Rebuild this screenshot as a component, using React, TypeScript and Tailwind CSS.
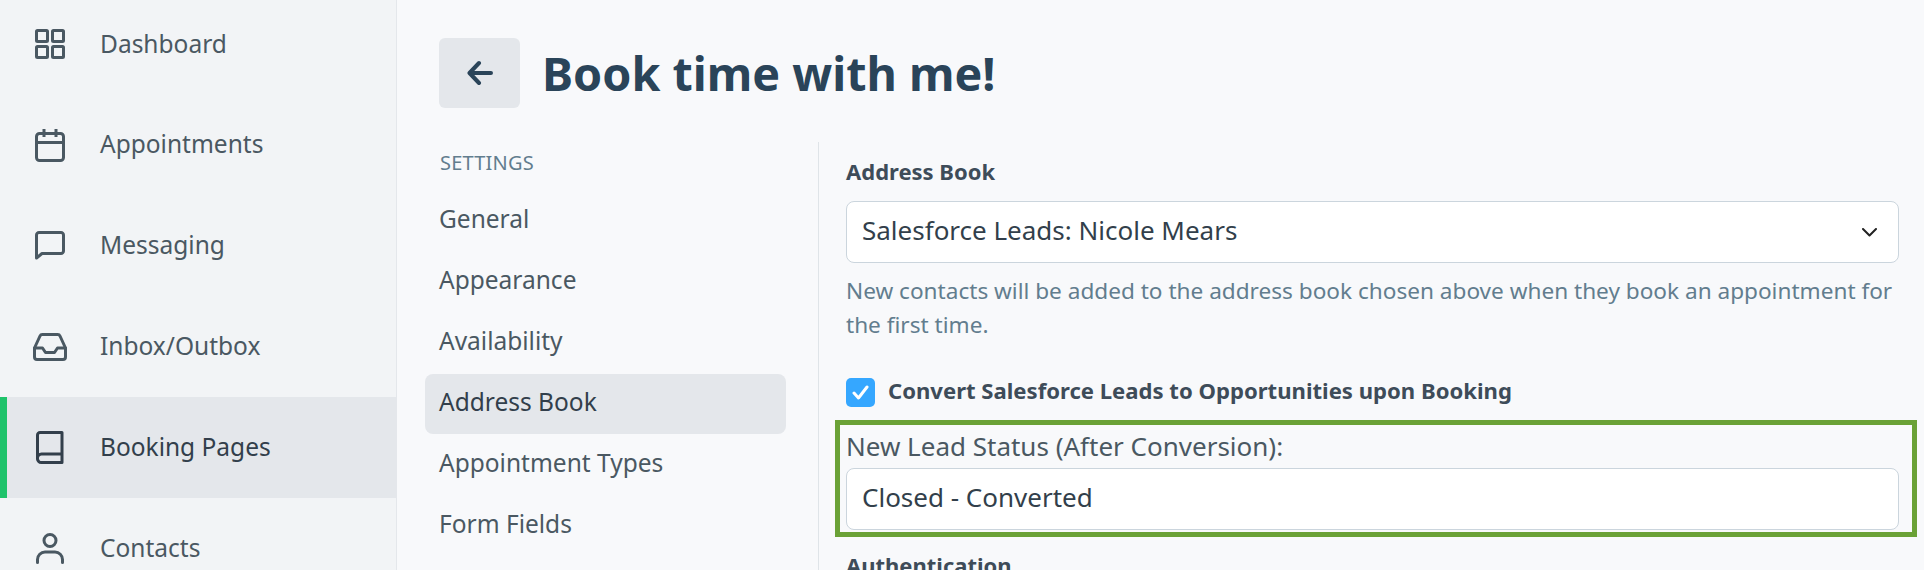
import React from 'react'

const fontStack = { fontFamily: '"Noto Sans", sans-serif' }

const DashboardIcon = () => (
  <svg width="30" height="30" viewBox="0 0 30 30" fill="none" stroke="currentColor" strokeWidth="3">
    <rect x="1.5" y="1.5" width="11" height="11" rx="1" />
    <rect x="17.5" y="1.5" width="11" height="11" rx="1" />
    <rect x="1.5" y="17.5" width="11" height="11" rx="1" />
    <rect x="17.5" y="17.5" width="11" height="11" rx="1" />
  </svg>
)

const CalendarIcon = () => (
  <svg width="30" height="33" viewBox="0 0 30 33" fill="none" stroke="currentColor" strokeWidth="3">
    <rect x="1.5" y="4.5" width="27" height="27" rx="3" />
    <path d="M1.5 13.5h27M9 0v8M21 0v8" />
  </svg>
)

const MessageIcon = () => (
  <svg width="30" height="30" viewBox="0 0 30 30" fill="none" stroke="currentColor" strokeWidth="3" strokeLinejoin="round">
    <path d="M1.5 27V4a2.5 2.5 0 0 1 2.5-2.5h22A2.5 2.5 0 0 1 28.5 4v16a2.5 2.5 0 0 1-2.5 2.5H7z" />
  </svg>
)

const InboxIcon = () => (
  <svg width="34" height="28" viewBox="0 0 34 28" fill="none" stroke="currentColor" strokeWidth="3" strokeLinejoin="round" strokeLinecap="round">
    <path d="M1.5 15v9a2.5 2.5 0 0 0 2.5 2.5h26a2.5 2.5 0 0 0 2.5-2.5v-9L27 3a2.5 2.5 0 0 0-2.3-1.5H9.3A2.5 2.5 0 0 0 7 3z" />
    <path d="M1.5 15h8l3 4.5h9l3-4.5h8" />
  </svg>
)

const BookIcon = () => (
  <svg width="28" height="33" viewBox="0 0 28 33" fill="none" stroke="currentColor" strokeWidth="3" strokeLinejoin="round">
    <path d="M1.5 27V4a2.5 2.5 0 0 1 2.5-2.5h22v30H5.500a4 4 0 0 1-4-4.500a4 4 0 0 1 4-4h20.500" />
  </svg>
)

const UserIcon = () => (
  <svg width="28" height="31" viewBox="0 0 28 31" fill="none" stroke="currentColor" strokeWidth="3" strokeLinecap="round">
    <circle cx="14" cy="7.500" r="6" />
    <path d="M1.500 29.500v-3a7.500 7.500 0 0 1 7.500-7.500h10a7.500 7.500 0 0 1 7.500 7.500v3" />
  </svg>
)

const sideItems = [
  { label: 'Dashboard', icon: <DashboardIcon /> },
  { label: 'Appointments', icon: <CalendarIcon /> },
  { label: 'Messaging', icon: <MessageIcon /> },
  { label: 'Inbox/Outbox', icon: <InboxIcon /> },
  { label: 'Booking Pages', icon: <BookIcon />, active: true },
  { label: 'Contacts', icon: <UserIcon /> },
]

const settingsItems = ['General', 'Appearance', 'Availability', 'Address Book', 'Appointment Types', 'Form Fields']

const Sidebar = () => (
  <aside className="w-[397px] shrink-0 border-r border-[#e4e7eb] bg-[#f2f4f6] -mt-[6px]">
    {sideItems.map((item) => (
      <div
        key={item.label}
        className={`flex h-[100.8px] items-center border-l-[7px] ${item.active ? 'border-[#1fc36b] bg-[#e4e7eb] text-[#323f4b]' : 'border-transparent text-[#4a5862]'}`}
      >
        <div className="flex w-[93px] shrink-0 justify-center pr-[7px]">{item.icon}</div>
        <span className="mb-[1px] text-[24.5px]">{item.label}</span>
      </div>
    ))}
  </aside>
)

const SelectBox = ({ value, chevron }: { value: string, chevron?: boolean }) => (
  <div className="flex h-[62px] items-center justify-between rounded-lg border border-[#cbd5dd] bg-white pl-[15px] pr-[21px] text-[26px] text-[#323f4b]">
    <span className="mb-[3px]">{value}</span>
    {chevron && (
      <svg width="15" height="9" viewBox="0 0 15 9" fill="none" stroke="#222" strokeWidth="2" strokeLinecap="round" strokeLinejoin="round">
        <path d="M1 1l6.500 6.500L14 1" />
      </svg>
    )}
  </div>
)

export default function App() {
  return (
    <div className="flex h-[570px] w-[1924px] overflow-hidden bg-[#f8f9fb]" style={fontStack}>
      <Sidebar />
      <main className="min-w-0 flex-1 pt-[38px]">
        <div className="flex items-center pl-[42px]">
          <button className="flex h-[70px] w-[81px] items-center justify-center rounded-md bg-[#e4e7eb] text-[#2a4459]">
            <svg width="26" height="26" viewBox="0 0 26 26" fill="none" stroke="currentColor" strokeWidth="4" strokeLinecap="round" strokeLinejoin="round">
              <path d="M24 13H3M12 3L2.500 13 12 23" />
            </svg>
          </button>
          <h1 className="ml-[22px] text-[46.7px] font-bold leading-[70px] text-[#2a4459]">Book time with me!</h1>
        </div>
        <div className="mt-[34px] flex">
          <nav className="w-[421px] shrink-0 pl-[28px] pr-[32px]">
            <div className="pl-[15px] pt-[9px] text-[20px] uppercase leading-[24px] tracking-[0.2px] text-[#627d8e]">Settings</div>
            <div className="mt-[16px] flex flex-col gap-[1px]">
              {settingsItems.map((item) => (
                <div
                  key={item}
                  className={`flex h-[60px] items-center rounded-lg pb-[4px] pl-[14px] text-[24.5px] ${item === 'Address Book' ? 'bg-[#e4e7eb] text-[#323f4b]' : 'text-[#4a5862]'}`}
                >
                  {item}
                </div>
              ))}
            </div>
          </nav>
          <section className="min-w-0 flex-1 border-l border-[#dfe4e8] pl-[27px] pr-[25px] pt-[13px]">
            <div className="text-[22px] font-bold leading-[32px] text-[#3e4c59]">Address Book</div>
            <div className="mt-[14px]">
              <SelectBox value="Salesforce Leads: Nicole Mears" chevron />
            </div>
            <p className="mt-[11px] text-[22.6px] leading-[34px] text-[#627d8e]">
              New contacts will be added to the address book chosen above when they book an appointment for the first time.
            </p>
            <div className="mt-[34px] flex h-[33px] items-center">
              <div className="flex h-[29px] w-[29px] items-center justify-center rounded-[5px] bg-[#35a7ff]">
                <svg width="17" height="15" viewBox="0 0 17 15" fill="none" stroke="white" strokeWidth="3" strokeLinecap="round" strokeLinejoin="round">
                  <path d="M2 8l4.500 5L15 2" />
                </svg>
              </div>
              <span className="mb-[3px] ml-[13px] text-[22.1px] font-bold text-[#3e4c59]">Convert Salesforce Leads to Opportunities upon Booking</span>
            </div>
            <div className="-ml-[11px] -mr-[18px] mt-[11px] border-[5px] border-[#6aa136] pb-[2px] pl-[6px] pr-[13px]">
              <div className="h-[43px] text-[26px] leading-[43px] text-[#4a5862]">New Lead Status (After Conversion):</div>
              <SelectBox value="Closed - Converted" />
            </div>
            <div className="mt-[12px] text-[22px] font-bold leading-[32px] text-[#3e4c59]">Authentication</div>
          </section>
        </div>
      </main>
    </div>
  )
}
